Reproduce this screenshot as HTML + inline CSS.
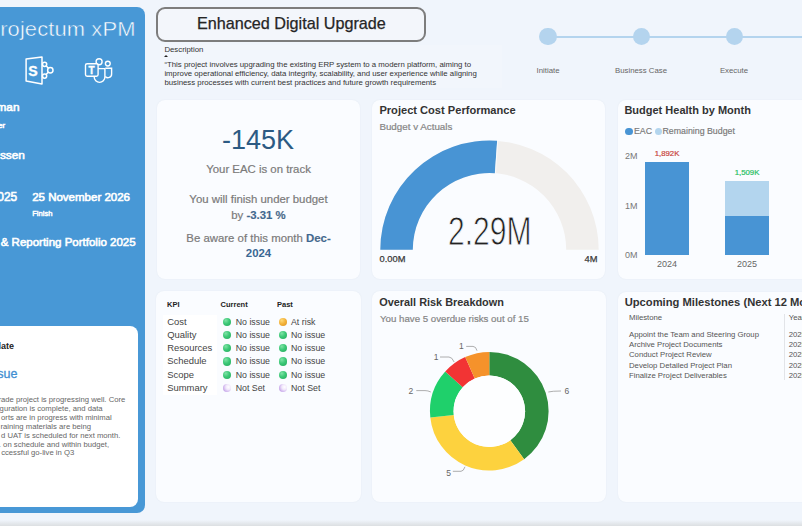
<!DOCTYPE html>
<html><head><meta charset="utf-8">
<style>
*{margin:0;padding:0;box-sizing:border-box}
html,body{width:802px;height:526px;overflow:hidden;background:#f0f5fc;font-family:"Liberation Sans",sans-serif;position:relative}
.a{position:absolute;white-space:nowrap;line-height:1}
.card{position:absolute;background:#fafcff;border-radius:8px;box-shadow:0 0 1.5px rgba(40,60,90,0.07)}
.b{font-weight:bold}
</style></head><body>

<!-- left blue panel -->
<div class="card" style="left:-10px;top:6.5px;width:154.5px;height:506.5px;background:#4898d6;border-radius:8px;box-shadow:none"></div>
<div class="a" style="right:666.4px;top:18.2px;font-size:21px;color:#fff;letter-spacing:0.1px;-webkit-text-stroke:0.5px #4898d6;transform:scaleX(1.045);transform-origin:100% 0">rojectum xPM</div>

<!-- sharepoint icon -->
<svg class="a" style="left:20px;top:52px" width="40" height="38" viewBox="20 52 40 38">
 <g fill="none" stroke="#fff" stroke-width="1.5" stroke-linejoin="round">
  <path d="M26.1 59.1 L42 57.1 L42 83.9 L26.1 80.9 Z"/>
  <circle cx="44.6" cy="64.3" r="2.1"/>
  <circle cx="50.3" cy="70.2" r="2.7"/>
  <circle cx="44.6" cy="76.1" r="2.1"/>
  <path d="M46.1 65.8 L48.4 68.3 M46.1 74.6 L48.4 72.1"/>
 </g>
 <text x="33.1" y="75.6" font-family="Liberation Sans" font-weight="bold" font-size="14.2" fill="#fff" stroke="#fff" stroke-width="0.3" text-anchor="middle">S</text>
</svg>
<!-- teams icon -->
<svg class="a" style="left:80px;top:52px" width="38" height="36" viewBox="80 52 38 36">
 <g fill="none" stroke="#fff" stroke-width="1.4">
  <circle cx="99.1" cy="61.8" r="3"/>
  <circle cx="107.8" cy="63.6" r="2.4"/>
  <path d="M105.3 68.3 L111.6 68.3 L111.6 74 A3.6 3.6 0 0 1 105.3 76.5"/>
  <path d="M94.2 68.6 L104.9 68.6 L104.9 77 A5.35 5.35 0 0 1 94.2 77 Z"/>
  <rect x="85.5" y="63.7" width="12.6" height="12.5" rx="1.6" fill="#4898d6"/>
 </g>
 <text x="91.6" y="73.8" font-family="Liberation Sans" font-weight="bold" font-size="10" fill="#fff" stroke="#fff" stroke-width="0.35" text-anchor="middle">T</text>
</svg>

<div class="a" style="right:782.5px;top:102.3px;font-size:11.8px;color:#fff;-webkit-text-stroke:0.6px #fff">man</div>
<div class="a" style="right:797px;top:122.3px;font-size:7.6px;color:#fff;-webkit-text-stroke:0.6px #fff">er</div>
<div class="a" style="right:777.2px;top:150.1px;font-size:11.8px;color:#fff;-webkit-text-stroke:0.6px #fff">ssen</div>
<div class="a" style="right:784.8px;top:191.6px;font-size:11.9px;color:#fff;-webkit-text-stroke:0.6px #fff">025</div>
<div class="a" style="left:32.2px;top:191.8px;font-size:11.5px;color:#fff;-webkit-text-stroke:0.6px #fff">25 November 2026</div>
<div class="a" style="left:32.2px;top:209.8px;font-size:7.6px;color:#fff;-webkit-text-stroke:0.45px #fff">Finish</div>
<div class="a" style="right:666.4px;top:237px;font-size:11.5px;color:#fff;-webkit-text-stroke:0.6px #fff">&amp; Reporting Portfolio 2025</div>

<!-- white inner card -->
<div class="card" style="left:-10px;top:326.2px;width:148px;height:181px;background:#fff;border-radius:8px;box-shadow:none"></div>
<div class="a b" style="right:788px;top:342px;font-size:9px;color:#222">late</div>
<div class="a" style="right:784.5px;top:368px;font-size:12.5px;color:#3f8fd2;-webkit-text-stroke:0.3px #3f8fd2">sue</div>
<div class="a" style="right:676.7px;top:396.0px;font-size:7.7px;color:#666">rade project is progressing well. Core</div>
<div class="a" style="right:699.4px;top:404.7px;font-size:7.7px;color:#666">guration is complete, and data</div>
<div class="a" style="right:690.3px;top:413.9px;font-size:7.7px;color:#666">orts are in progress with minimal</div>
<div class="a" style="right:710.9px;top:423.0px;font-size:7.7px;color:#666">raining materials are being</div>
<div class="a" style="right:681.6px;top:431.7px;font-size:7.7px;color:#666">d UAT is scheduled for next month.</div>
<div class="a" style="right:692.9px;top:440.8px;font-size:7.7px;color:#666">. on schedule and within budget,</div>
<div class="a" style="right:727.8px;top:449.2px;font-size:7.7px;color:#666">ccessful go-live in Q3</div>

<!-- title box -->
<div class="a" style="left:155.5px;top:6.5px;width:270.5px;height:35.5px;border:2px solid #7d7d7d;border-radius:9px;background:#f3f6fb"></div>
<div class="a" style="left:196.9px;top:15.3px;font-size:16.2px;color:#252525;-webkit-text-stroke:0.25px #252525">Enhanced Digital Upgrade</div>

<!-- description -->
<div class="a" style="left:160px;top:44.5px;width:342px;height:43px;background:#f2f6fc"></div>
<div class="a" style="left:164.4px;top:45.8px;font-size:7.8px;color:#333">Description</div>
<div class="a" style="left:164.4px;top:55.1px;width:0;height:0;border-left:2.75px solid transparent;border-right:2.75px solid transparent;border-bottom:2.6px solid #222"></div>
<div class="a" style="left:164.4px;top:60px;font-size:7.8px;line-height:9px;color:#333;white-space:pre">“This project involves upgrading the existing ERP system to a modern platform, aiming to
improve operational efficiency, data integrity, scalability, and user experience while aligning
business processes with current best practices and future growth requirements</div>

<!-- timeline -->
<div class="a" style="left:548px;top:35.5px;width:260px;height:2.1px;background:#b4d4ee"></div>
<div class="a" style="left:539px;top:27.8px;width:17.5px;height:17.5px;border-radius:50%;background:#b4d4ee"></div>
<div class="a" style="left:632.5px;top:27.8px;width:17.5px;height:17.5px;border-radius:50%;background:#b4d4ee"></div>
<div class="a" style="left:725.5px;top:27.8px;width:17.5px;height:17.5px;border-radius:50%;background:#b4d4ee"></div>
<div class="a" style="left:508px;top:66.5px;width:80px;text-align:center;font-size:7.8px;color:#666">Initiate</div>
<div class="a" style="left:601px;top:66.5px;width:80px;text-align:center;font-size:7.8px;color:#666">Business Case</div>
<div class="a" style="left:694px;top:66.5px;width:80px;text-align:center;font-size:7.8px;color:#666">Execute</div>

<!-- EAC card -->
<div class="card" style="left:156.8px;top:100.3px;width:203.2px;height:178.5px"></div>
<div class="a" style="left:222px;top:127px;font-size:27px;color:#2c5a83">-145K</div>
<div class="a" style="left:157px;width:203px;text-align:center;top:163.5px;font-size:11.4px;color:#7a7a7a;-webkit-text-stroke:0.2px #7a7a7a">Your EAC is on track</div>
<div class="a" style="left:157px;width:203px;text-align:center;top:194px;font-size:11.4px;color:#7a7a7a;-webkit-text-stroke:0.2px #7a7a7a">You will finish under budget</div>
<div class="a" style="left:157px;width:203px;text-align:center;top:209.5px;font-size:11.4px;color:#7a7a7a;-webkit-text-stroke:0.2px #7a7a7a">by <b style="color:#3a6893">-3.31 %</b></div>
<div class="a" style="left:157px;width:203px;text-align:center;top:232.8px;font-size:11.4px;color:#7a7a7a;-webkit-text-stroke:0.2px #7a7a7a">Be aware of this month <b style="color:#3a6893">Dec-</b></div>
<div class="a b" style="left:157px;width:203px;text-align:center;top:248.3px;font-size:11.4px;color:#3a6893">2024</div>

<!-- cost performance card -->
<div class="card" style="left:371.8px;top:100.3px;width:233.7px;height:178.5px"></div>
<div class="a b" style="left:379.4px;top:105px;font-size:11.1px;color:#333">Project Cost Performance</div>
<div class="a" style="left:379.4px;top:122px;font-size:9.8px;color:#858585;-webkit-text-stroke:0.2px #858585">Budget v Actuals</div>
<svg class="a" style="left:372px;top:130px" width="234" height="130" viewBox="372 130 234 130">
 <path d="M380.3 249.8 A109.2 109.2 0 0 1 598.7 249.8 L566.2 249.8 A76.7 76.7 0 0 0 412.8 249.8 Z" fill="#f1efed"/>
 <path d="M380.3 249.8 A109.2 109.2 0 0 1 497.12 140.87 L494.85 173.29 A76.7 76.7 0 0 0 412.8 249.8 Z" fill="#4894d4"/>
 <path d="M497.72 140.87 L495.45 173.29" stroke="#fafcff" stroke-width="0.8"/>
</svg>
<div class="a" style="left:447.6px;top:211px;font-size:40px;color:#222;transform:scaleX(0.752);transform-origin:0 0;-webkit-text-stroke:0.9px #fafcff">2.29M</div>
<div class="a" style="left:379.6px;top:255px;font-size:9.3px;color:#3a3a3a;-webkit-text-stroke:0.25px #3a3a3a">0.00M</div>
<div class="a" style="left:584.6px;top:255px;font-size:9.3px;color:#3a3a3a;-webkit-text-stroke:0.25px #3a3a3a">4M</div>

<!-- budget health card -->
<div class="card" style="left:618.4px;top:100.3px;width:200px;height:178.7px"></div>
<div class="a b" style="left:624.4px;top:105px;font-size:11px;color:#333">Budget Health by Month</div>
<div class="a" style="left:625.3px;top:128px;width:7.4px;height:7.4px;border-radius:50%;background:#4894d4"></div>
<div class="a" style="left:634px;top:127px;font-size:8.8px;color:#777;-webkit-text-stroke:0.15px #777">EAC</div>
<div class="a" style="left:654.5px;top:128px;width:7.4px;height:7.4px;border-radius:50%;background:#b3d5ee"></div>
<div class="a" style="left:662.5px;top:127px;font-size:8.8px;color:#777;-webkit-text-stroke:0.15px #777">Remaining Budget</div>
<div class="a" style="left:625px;top:152px;font-size:9px;color:#777">2M</div>
<div class="a" style="left:625px;top:201.5px;font-size:9px;color:#777">1M</div>
<div class="a" style="left:625px;top:251px;font-size:9px;color:#777">0M</div>
<div class="a" style="left:645.4px;top:161.5px;width:43.3px;height:93.9px;background:#4894d4"></div>
<div class="a" style="left:725.2px;top:180.5px;width:43.8px;height:35.7px;background:#b3d5ee"></div>
<div class="a" style="left:725.2px;top:216.2px;width:43.8px;height:39.2px;background:#4894d4"></div>
<div class="a" style="left:627px;width:80px;text-align:center;top:150px;font-size:7.8px;color:#c8443c;-webkit-text-stroke:0.2px #c8443c">1,892K</div>
<div class="a" style="left:707px;width:80px;text-align:center;top:169.2px;font-size:7.8px;color:#27c063;-webkit-text-stroke:0.2px #27c063">1,509K</div>
<div class="a" style="left:627px;width:80px;text-align:center;top:259.5px;font-size:9px;color:#666">2024</div>
<div class="a" style="left:707px;width:80px;text-align:center;top:259.5px;font-size:9px;color:#666">2025</div>

<!-- KPI card -->
<div class="card" style="left:156.4px;top:291.4px;width:205px;height:210.5px"></div>
<div class="a" style="left:163px;top:314.5px;width:54px;height:80px;background:#fff"></div>
<div class="a b" style="left:167px;top:300.5px;font-size:7.5px;color:#222">KPI</div>
<div class="a b" style="left:220.6px;top:300.5px;font-size:7.5px;color:#222">Current</div>
<div class="a b" style="left:277px;top:300.5px;font-size:7.5px;color:#222">Past</div>
<div class="a" style="left:167.2px;top:316.7px;font-size:9.45px;color:#444">Cost</div>
<div class="a" style="left:222.8px;top:317.6px;width:8.4px;height:8.4px;border-radius:50%;background:radial-gradient(circle at 35% 30%,#7fe3a5 0%,#3cc877 45%,#24a85a 100%)"></div>
<div class="a" style="left:235.7px;top:317.6px;font-size:8.8px;color:#444">No issue</div>
<div class="a" style="left:278.8px;top:317.6px;width:8.4px;height:8.4px;border-radius:50%;background:radial-gradient(circle at 35% 30%,#ffd978 0%,#f3b43c 45%,#dc9020 100%)"></div>
<div class="a" style="left:291px;top:317.6px;font-size:8.8px;color:#444">At risk</div>
<div class="a" style="left:167.2px;top:330.1px;font-size:9.45px;color:#444">Quality</div>
<div class="a" style="left:222.8px;top:331.0px;width:8.4px;height:8.4px;border-radius:50%;background:radial-gradient(circle at 35% 30%,#7fe3a5 0%,#3cc877 45%,#24a85a 100%)"></div>
<div class="a" style="left:235.7px;top:331.0px;font-size:8.8px;color:#444">No issue</div>
<div class="a" style="left:278.8px;top:331.0px;width:8.4px;height:8.4px;border-radius:50%;background:radial-gradient(circle at 35% 30%,#7fe3a5 0%,#3cc877 45%,#24a85a 100%)"></div>
<div class="a" style="left:291px;top:331.0px;font-size:8.8px;color:#444">No issue</div>
<div class="a" style="left:167.2px;top:343.2px;font-size:9.45px;color:#444">Resources</div>
<div class="a" style="left:222.8px;top:344.1px;width:8.4px;height:8.4px;border-radius:50%;background:radial-gradient(circle at 35% 30%,#7fe3a5 0%,#3cc877 45%,#24a85a 100%)"></div>
<div class="a" style="left:235.7px;top:344.1px;font-size:8.8px;color:#444">No issue</div>
<div class="a" style="left:278.8px;top:344.1px;width:8.4px;height:8.4px;border-radius:50%;background:radial-gradient(circle at 35% 30%,#7fe3a5 0%,#3cc877 45%,#24a85a 100%)"></div>
<div class="a" style="left:291px;top:344.1px;font-size:8.8px;color:#444">No issue</div>
<div class="a" style="left:167.2px;top:356.3px;font-size:9.45px;color:#444">Schedule</div>
<div class="a" style="left:222.8px;top:357.2px;width:8.4px;height:8.4px;border-radius:50%;background:radial-gradient(circle at 35% 30%,#7fe3a5 0%,#3cc877 45%,#24a85a 100%)"></div>
<div class="a" style="left:235.7px;top:357.2px;font-size:8.8px;color:#444">No issue</div>
<div class="a" style="left:278.8px;top:357.2px;width:8.4px;height:8.4px;border-radius:50%;background:radial-gradient(circle at 35% 30%,#7fe3a5 0%,#3cc877 45%,#24a85a 100%)"></div>
<div class="a" style="left:291px;top:357.2px;font-size:8.8px;color:#444">No issue</div>
<div class="a" style="left:167.2px;top:369.7px;font-size:9.45px;color:#444">Scope</div>
<div class="a" style="left:222.8px;top:370.6px;width:8.4px;height:8.4px;border-radius:50%;background:radial-gradient(circle at 35% 30%,#7fe3a5 0%,#3cc877 45%,#24a85a 100%)"></div>
<div class="a" style="left:235.7px;top:370.6px;font-size:8.8px;color:#444">No issue</div>
<div class="a" style="left:278.8px;top:370.6px;width:8.4px;height:8.4px;border-radius:50%;background:radial-gradient(circle at 35% 30%,#7fe3a5 0%,#3cc877 45%,#24a85a 100%)"></div>
<div class="a" style="left:291px;top:370.6px;font-size:8.8px;color:#444">No issue</div>
<div class="a" style="left:167.2px;top:382.7px;font-size:9.45px;color:#444">Summary</div>
<div class="a" style="left:222.8px;top:383.6px;width:8.4px;height:8.4px;border-radius:50%;background:radial-gradient(circle at 68% 38%,#ffffff 0%,#f1e8fb 35%,#cdb0ec 70%,#a77fd6 100%)"></div>
<div class="a" style="left:235.7px;top:383.6px;font-size:8.8px;color:#444">Not Set</div>
<div class="a" style="left:278.8px;top:383.6px;width:8.4px;height:8.4px;border-radius:50%;background:radial-gradient(circle at 68% 38%,#ffffff 0%,#f1e8fb 35%,#cdb0ec 70%,#a77fd6 100%)"></div>
<div class="a" style="left:291px;top:383.6px;font-size:8.8px;color:#444">Not Set</div>

<!-- risk card -->
<div class="card" style="left:372.4px;top:291.4px;width:233.6px;height:210.5px"></div>
<div class="a b" style="left:379.2px;top:296.8px;font-size:10.9px;color:#333">Overall Risk Breakdown</div>
<div class="a" style="left:380px;top:313.5px;font-size:9.7px;color:#858585;-webkit-text-stroke:0.2px #858585">You have 5 overdue risks out of 15</div>

<!-- milestones card -->
<div class="card" style="left:617.8px;top:292.3px;width:200px;height:209.6px"></div>
<div class="a b" style="left:624.7px;top:296.8px;font-size:11.2px;color:#333">Upcoming Milestones (Next 12 Months)</div>

<svg class="a" style="left:372px;top:330px" width="234" height="160" viewBox="372 330 234 160">
<path d="M489.30 351.90 A59.3 59.3 0 0 1 524.16 459.17 L510.34 440.16 A35.8 35.8 0 0 0 489.30 375.40 Z" fill="#2f8d3f"/><path d="M524.16 459.17 A59.3 59.3 0 0 1 430.32 417.40 L453.70 414.94 A35.8 35.8 0 0 0 510.34 440.16 Z" fill="#fdd23e"/><path d="M430.32 417.40 A59.3 59.3 0 0 1 445.23 371.52 L462.70 387.25 A35.8 35.8 0 0 0 453.70 414.94 Z" fill="#1fd06b"/><path d="M445.23 371.52 A59.3 59.3 0 0 1 465.18 357.03 L474.74 378.50 A35.8 35.8 0 0 0 462.70 387.25 Z" fill="#f23434"/><path d="M465.18 357.03 A59.3 59.3 0 0 1 489.30 351.90 L489.30 375.40 A35.8 35.8 0 0 0 474.74 378.50 Z" fill="#f5922b"/>
<circle cx="489.3" cy="411.2" r="35.8" fill="#fdfeff"/>
<g fill="none" stroke="#999" stroke-width="0.8">
<path d="M548.3 392 Q552 391 561 391"/>
<path d="M465 466.8 Q463.5 471.3 461 471.3 L452.8 471.3"/>
<path d="M430.8 392 Q428 390.6 425 390.6 L416.3 390.6"/>
<path d="M454.2 362.1 Q452 357 449 357 L440 357"/>
<path d="M477 350.7 Q476 346.4 473 346.4 L466.2 346.4"/>
</g>
<g font-family="Liberation Sans" font-size="8.5" fill="#666" text-anchor="middle">
<text x="566.9" y="393.6">6</text><text x="448.5" y="475.8">5</text><text x="410.8" y="393.6">2</text><text x="436.2" y="360">1</text><text x="461.3" y="349.4">1</text>
</g></svg>
<div class="a" style="left:629px;top:314.4px;font-size:7.75px;color:#555">Milestone</div>
<div class="a" style="left:788.7px;top:314.4px;font-size:7.75px;color:#555">Year</div>
<div class="a" style="left:784px;top:313.5px;width:0.8px;height:66px;background:#e2e4e8"></div>

<div class="a" style="left:629px;top:330.5px;font-size:7.75px;color:#555">Appoint the Team and Steering Group</div>
<div class="a" style="left:788.7px;top:330.5px;font-size:7.75px;color:#555">2025</div>
<div class="a" style="left:629px;top:341.0px;font-size:7.75px;color:#555">Archive Project Documents</div>
<div class="a" style="left:788.7px;top:341.0px;font-size:7.75px;color:#555">2025</div>
<div class="a" style="left:629px;top:351.0px;font-size:7.75px;color:#555">Conduct Project Review</div>
<div class="a" style="left:788.7px;top:351.0px;font-size:7.75px;color:#555">2025</div>
<div class="a" style="left:629px;top:361.5px;font-size:7.75px;color:#555">Develop Detailed Project Plan</div>
<div class="a" style="left:788.7px;top:361.5px;font-size:7.75px;color:#555">2025</div>
<div class="a" style="left:629px;top:372.0px;font-size:7.75px;color:#555">Finalize Project Deliverables</div>
<div class="a" style="left:788.7px;top:372.0px;font-size:7.75px;color:#555">2025</div>
<div class="a" style="left:0;top:520px;width:802px;height:6px;background:linear-gradient(#f0f5fc,#e6eaee 50%,#dcdfe2)"></div>
</body></html>
